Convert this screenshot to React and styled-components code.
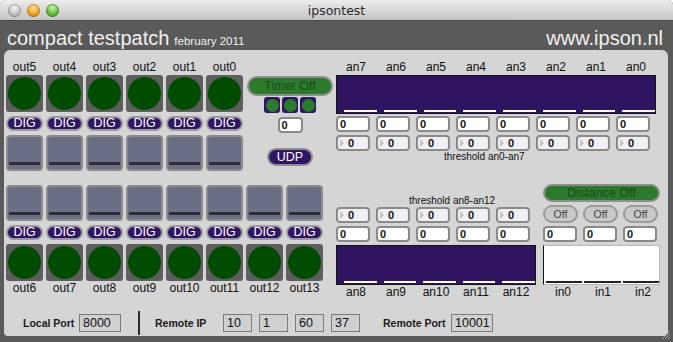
import styled, { createGlobalStyle } from "styled-components";

const GlobalStyle = createGlobalStyle`
  html, body {
    margin: 0;
    padding: 0;
    background: #ffffff;
  }
  body {
    font-family: "Liberation Sans", Arial, sans-serif;
  }
`;

const Window = styled.div`
  width: 673px;
  height: 342px;
  position: relative;
  display: flex;
  flex-direction: column;
  overflow: hidden;
  background: #5a5a5a;
  border-radius: 5px 5px 0 0;
`;

const TitleBar = styled.div`
  height: 21px;
  flex: none;
  box-sizing: border-box;
  display: grid;
  grid-template-columns: 1fr auto 1fr;
  align-items: center;
  background: linear-gradient(#ededed, #d6d6d6 55%, #c5c5c5);
  border-bottom: 1px solid #4a4a4a;
`;

const Lights = styled.div`
  display: flex;
  gap: 6px;
  padding-left: 8px;
`;

const Light = styled.span`
  width: 13px;
  height: 13px;
  border-radius: 50%;
  background: radial-gradient(circle at 50% 30%, ${(p) => p.$hi} 0%, ${(p) => p.$c} 55%, ${(p) => p.$edge} 100%);
  box-shadow: inset 0 0 0 1px rgba(0, 0, 0, 0.22);
`;

const Title = styled.div`
  font-family: "DejaVu Sans", sans-serif;
  font-size: 12.5px;
  color: #2b2b2b;
`;

const Header = styled.div`
  height: 29px;
  flex: none;
  box-sizing: border-box;
  padding: 7px 10px 0 7px;
  display: flex;
  align-items: baseline;
  justify-content: space-between;
  color: #f0f0f0;
  font-size: 20px;
  line-height: 20px;
`;

const Small = styled.span`
  font-size: 11.5px;
  margin-left: 5px;
`;

const Panel = styled.div`
  height: 286px;
  flex: none;
  box-sizing: border-box;
  margin: 0 5px 0 4px;
  padding: 10px 0 0 2px;
  background: #d5d5d5;
  border-radius: 6px 6px 4px 4px;
  display: flex;
  flex-direction: column;
`;

const Row = styled.div`
  display: flex;
  align-items: flex-start;
  margin-top: ${(p) => p.$mt || 0}px;
`;

const OutGroup = styled.div`
  display: flex;
  gap: 3px;
  padding-top: ${(p) => p.$pt || 0}px;
`;

const OutCell = styled.div`
  width: 37px;
  display: flex;
  flex-direction: ${(p) => (p.$reverse ? "column-reverse" : "column")};
`;

const CellLabel = styled.div`
  height: 15px;
  line-height: 15px;
  font-size: 12px;
  text-align: center;
  color: #111;
  white-space: nowrap;
`;

const Led = styled.div`
  height: 37px;
  border-radius: 3px;
  background: #5e5e5e;
  display: flex;
  align-items: center;
  justify-content: center;
  &::after {
    content: "";
    width: 33px;
    height: 33px;
    border-radius: 50%;
    background: #004c00;
  }
`;

const DigPill = styled.div`
  height: 15px;
  margin: 4px 0 4px;
  box-sizing: border-box;
  border: 2px solid #9a9a9a;
  border-radius: 8px;
  background: #2f1566;
  color: #fff;
  font-size: 12.5px;
  line-height: 11px;
  text-align: center;
`;

const Fader = styled.div`
  height: 36px;
  box-sizing: border-box;
  border: 2px solid #8c8c8c;
  border-radius: 4px;
  background: #6b6f86;
  display: flex;
  align-items: flex-end;
  padding: 0 1px 4px;
  &::after {
    content: "";
    flex: 1;
    height: 3px;
    background: #2c2d35;
  }
`;

const TimerCol = styled.div`
  width: 86px;
  margin-left: 4px;
  padding-top: 16px;
  display: flex;
  flex-direction: column;
  align-items: center;
`;

const ToggleButton = styled.div`
  width: 100%;
  height: ${(p) => p.$h}px;
  box-sizing: border-box;
  border: 2px solid #8e8e8e;
  border-radius: 10px;
  background: #2c7a2c;
  color: #1b4a1b;
  font-size: 12.5px;
  line-height: ${(p) => p.$h - 4}px;
  text-align: center;
`;

const DotRow = styled.div`
  display: flex;
  gap: 2px;
  margin-top: 1px;
`;

const DotSquare = styled.div`
  width: 16px;
  height: 16px;
  border-radius: 3px;
  background: #2f1566;
  display: flex;
  align-items: center;
  justify-content: center;
  &::after {
    content: "";
    width: 13px;
    height: 13px;
    border-radius: 50%;
    background: #2a7b2a;
  }
`;

const NumBox = styled.div`
  width: ${(p) => p.$w || 34}px;
  height: 16px;
  margin-top: ${(p) => p.$mt || 0}px;
  box-sizing: border-box;
  border: 2px solid #8a8a8a;
  border-radius: 4px;
  background: #ffffff;
  padding-left: 2px;
  font-size: 11px;
  font-weight: bold;
  line-height: 12px;
  color: #111;
`;

const SlideBox = styled.div`
  width: 34px;
  height: 16px;
  box-sizing: border-box;
  border: 2px solid #8a8a8a;
  border-radius: 4px;
  background: #f0eff3;
  display: flex;
  align-items: center;
  gap: 4px;
  padding-left: 2px;
  font-size: 11px;
  font-weight: bold;
  color: #111;
  &::before {
    content: "";
    border-left: 4px solid #c6c6c6;
    border-top: 4px solid transparent;
    border-bottom: 4px solid transparent;
  }
`;

const UdpButton = styled.div`
  width: 46px;
  height: 18px;
  margin-top: 15px;
  box-sizing: border-box;
  border: 2px solid #8e8e8e;
  border-radius: 9px;
  background: #2f1566;
  color: #fff;
  font-size: 12.5px;
  line-height: 14px;
  text-align: center;
`;

const Analog = styled.div`
  width: ${(p) => p.$cols * 40}px;
  margin-left: ${(p) => p.$ml}px;
  padding-top: ${(p) => p.$pt || 0}px;
  display: flex;
  flex-direction: column;
`;

const ColGrid = styled.div`
  display: grid;
  grid-template-columns: repeat(${(p) => p.$cols}, 40px);
  margin-top: ${(p) => p.$mt || 0}px;
`;

const Meter = styled.div`
  height: ${(p) => p.$h}px;
  margin-top: ${(p) => p.$mt || 0}px;
  box-sizing: border-box;
  display: grid;
  grid-template-columns: repeat(${(p) => p.$cols}, 1fr);
  align-items: end;
  background: ${(p) => (p.$light ? "#ffffff" : "#2f1462")};
  border: 1px solid ${(p) => (p.$light ? "#b8b8b8" : "#141414")};
  border-left-color: #141414;
`;

const MeterBar = styled.div`
  height: 2px;
  margin-left: ${(p) => (p.$light ? 2 : 7)}px;
  margin-bottom: 1px;
  background: ${(p) => (p.$light ? "#222" : "#ffffff")};
`;

const Threshold = styled.div`
  font-size: 10px;
  line-height: 12px;
  color: #111;
  margin-left: ${(p) => p.$ml}px;
  margin-top: ${(p) => p.$mt || 0}px;
`;

const DistanceCol = styled.div`
  width: 117px;
  margin-left: 7px;
  display: flex;
  flex-direction: column;
`;

const OffPill = styled.div`
  width: 35px;
  height: 18px;
  box-sizing: border-box;
  border: 2px solid #9a9a9a;
  border-radius: 9px;
  background: #c8c8c8;
  color: #444;
  font-size: 10.5px;
  line-height: 14px;
  text-align: center;
`;

const Footer = styled.div`
  height: 24px;
  margin-top: 11px;
  padding-left: 17px;
  display: flex;
  align-items: center;
`;

const FooterLabel = styled.div`
  width: ${(p) => p.$w}px;
  margin-left: ${(p) => p.$ml || 0}px;
  font-size: 10.5px;
  font-weight: bold;
  color: #1a1a1a;
  white-space: nowrap;
`;

const PortBox = styled.div`
  width: ${(p) => p.$w}px;
  height: 18px;
  margin-left: ${(p) => p.$ml}px;
  box-sizing: border-box;
  border: 1px solid #7c7c7c;
  background: #d0d0d0;
  padding-left: 3px;
  font-size: 12.5px;
  line-height: 16px;
  color: #111;
`;

const Divider = styled.div`
  width: 2px;
  height: 24px;
  margin-left: 17px;
  background: #2a2a2a;
`;

const Grip = styled.svg`
  position: absolute;
  right: 2px;
  bottom: 2px;
`;

const topOuts = ["out5", "out4", "out3", "out2", "out1", "out0"];
const bottomOuts = ["out6", "out7", "out8", "out9", "out10", "out11", "out12", "out13"];
const topAn = ["an7", "an6", "an5", "an4", "an3", "an2", "an1", "an0"];
const bottomAn = ["an8", "an9", "an10", "an11", "an12"];
const inputs = ["in0", "in1", "in2"];

const Outs = ({ names, reverse }) => (
  <OutGroup $pt={reverse ? 1 : 0}>
    {names.map((n) => (
      <OutCell key={n} $reverse={reverse}>
        <CellLabel>{n}</CellLabel>
        <Led />
        <DigPill>DIG</DigPill>
        <Fader />
      </OutCell>
    ))}
  </OutGroup>
);

const Labels = ({ names }) => (
  <ColGrid $cols={names.length}>
    {names.map((n) => (
      <CellLabel key={n}>{n}</CellLabel>
    ))}
  </ColGrid>
);

const Nums = ({ count, mt }) => (
  <ColGrid $cols={count} $mt={mt}>
    {Array.from({ length: count }, (_, i) => (
      <NumBox key={i}>0</NumBox>
    ))}
  </ColGrid>
);

const Slides = ({ count, mt }) => (
  <ColGrid $cols={count} $mt={mt}>
    {Array.from({ length: count }, (_, i) => (
      <SlideBox key={i}>0</SlideBox>
    ))}
  </ColGrid>
);

const MeterView = ({ count, h, mt, light }) => (
  <Meter $cols={count} $h={h} $mt={mt} $light={light}>
    {Array.from({ length: count }, (_, i) => (
      <MeterBar key={i} $light={light} />
    ))}
  </Meter>
);

export default function App() {
  return (
    <>
      <GlobalStyle />
      <Window>
        <TitleBar>
          <Lights>
            <Light $hi="#f4f4f4" $c="#c4c4c4" $edge="#8e8e8e" />
            <Light $hi="#ffe0a0" $c="#f2a11e" $edge="#b06a00" />
            <Light $hi="#c8f5a8" $c="#5bbc38" $edge="#2e7a18" />
          </Lights>
          <Title>ipsontest</Title>
          <div />
        </TitleBar>

        <Header>
          <div>
            compact testpatch<Small>february 2011</Small>
          </div>
          <div>www.ipson.nl</div>
        </Header>

        <Panel>
          <Row>
            <Outs names={topOuts} />
            <TimerCol>
              <ToggleButton $h={20}>Timer Off</ToggleButton>
              <DotRow>
                <DotSquare />
                <DotSquare />
                <DotSquare />
              </DotRow>
              <NumBox $w={25} $mt={4}>0</NumBox>
              <UdpButton>UDP</UdpButton>
            </TimerCol>
            <Analog $cols={8} $ml={3}>
              <Labels names={topAn} />
              <MeterView count={8} h={39} />
              <Nums count={8} mt={2} />
              <Slides count={8} mt={3} />
              <Threshold $ml={108}>threshold an0-an7</Threshold>
            </Analog>
          </Row>

          <Row $mt={13}>
            <Outs names={bottomOuts} reverse />
            <Analog $cols={5} $ml={13} $pt={11}>
              <Threshold $ml={73}>threshold an8-an12</Threshold>
              <Slides count={5} />
              <Nums count={5} mt={3} />
              <MeterView count={5} h={40} mt={3} />
              <Labels names={bottomAn} />
            </Analog>
            <DistanceCol>
              <ToggleButton $h={18}>Distance Off</ToggleButton>
              <ColGrid $cols={3} $mt={3}>
                {inputs.map((n) => (
                  <OffPill key={n}>Off</OffPill>
                ))}
              </ColGrid>
              <Nums count={3} mt={3} />
              <MeterView count={3} h={40} mt={3} light />
              <Labels names={inputs} />
            </DistanceCol>
          </Row>

          <Footer>
            <FooterLabel $w={50}>Local Port</FooterLabel>
            <PortBox $w={42} $ml={6}>8000</PortBox>
            <Divider />
            <FooterLabel $w={53} $ml={15}>Remote IP</FooterLabel>
            <PortBox $w={29} $ml={15}>10</PortBox>
            <PortBox $w={29} $ml={7}>1</PortBox>
            <PortBox $w={29} $ml={7}>60</PortBox>
            <PortBox $w={29} $ml={7}>37</PortBox>
            <FooterLabel $w={63} $ml={23}>Remote Port</FooterLabel>
            <PortBox $w={42} $ml={5}>10001</PortBox>
          </Footer>
        </Panel>

        <Grip width="10" height="10" viewBox="0 0 10 10">
          <path d="M9 1 L1 9 M9 4 L4 9 M9 7 L7 9" stroke="#9a9a9a" strokeWidth="1" />
        </Grip>
      </Window>
    </>
  );
}
